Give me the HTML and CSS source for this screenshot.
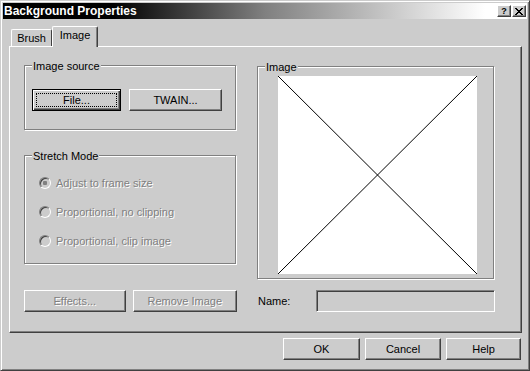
FILE: index.html
```html
<!DOCTYPE html>
<html lang="en">
<head>
    <meta charset="UTF-8">
    <meta name="viewport" content="width=device-width, initial-scale=1.0">
    <title>Background Properties</title>
    <link rel="stylesheet" href="styles.css">
</head>

<body>
    <div class="window">
        <div class="titlebar">
            <span class="title">Background Properties</span>
            <div class="caption-buttons">
                <button class="caption-btn help-btn">?</button>
                <button class="caption-btn close-btn">
                    <svg width="8" height="7" viewBox="0 0 8 7" shape-rendering="crispEdges">
                        <path d="M0 0h2v1h1v1h2v-1h1v-1h2v1h-1v1h-1v1h-1v1h1v1h1v1h1v1h-2v-1h-1v-1h-2v1h-1v1h-2v-1h1v-1h1v-1h1v-1h-1v-1h-1v-1h-1z" fill="#000"/>
                    </svg>
                </button>
            </div>
        </div>

        <div class="dialog-body">
            <div class="tabs">
                <div class="tab">Brush</div>
                <div class="tab active">Image</div>
            </div>

            <div class="tab-panel">
                <div class="col-left">
                    <div class="group source-group">
                        <span class="group-label">Image source</span>
                        <div class="source-buttons">
                            <button class="btn default file-btn">File...</button>
                            <button class="btn twain-btn">TWAIN...</button>
                        </div>
                    </div>

                    <div class="group stretch-group">
                        <span class="group-label">Stretch Mode</span>
                        <div class="radio-list">
                            <div class="radio disabled"><span class="radio-dot checked"></span>Adjust to frame size</div>
                            <div class="radio disabled"><span class="radio-dot"></span>Proportional, no clipping</div>
                            <div class="radio disabled"><span class="radio-dot"></span>Proportional, clip image</div>
                        </div>
                    </div>

                    <div class="action-buttons">
                        <button class="btn disabled effects-btn">Effects...</button>
                        <button class="btn disabled remove-btn">Remove Image</button>
                    </div>
                </div>

                <div class="col-right">
                    <div class="group image-group">
                        <span class="group-label">Image</span>
                        <div class="preview">
                            <svg width="199" height="198" viewBox="0 0 199 198">
                                <line x1="0" y1="0" x2="199" y2="198" stroke="#000" stroke-width="1"/>
                                <line x1="199" y1="0" x2="0" y2="198" stroke="#000" stroke-width="1"/>
                            </svg>
                        </div>
                    </div>
                    <div class="name-row">
                        <span class="name-label">Name:</span>
                        <div class="name-field"></div>
                    </div>
                </div>
            </div>

            <div class="dialog-buttons">
                <button class="btn ok-btn">OK</button>
                <button class="btn cancel-btn">Cancel</button>
                <button class="btn help-dlg-btn">Help</button>
            </div>
        </div>
    </div>
</body>
</html>
```

FILE: styles.css
```css
body {
    margin: 0;
    padding: 0;
    background-color: #cccccc;
}

.window {
    width: 530px;
    height: 371px;
    box-sizing: border-box;
    background: #cccccc;
    border: 1px solid;
    border-color: #cccccc #404040 #404040 #cccccc;
    box-shadow: inset 1px 1px #ffffff, inset -1px -1px #808080;
    padding: 2px;
    font-family: "Liberation Sans", Arial, sans-serif;
    font-size: 11px;
    color: #000;
}

/* title bar */
.titlebar {
    height: 16px;
    display: flex;
    align-items: center;
    justify-content: space-between;
    padding: 0 1px 0 1px;
    background: linear-gradient(to right, #000 110px, #808080 262px, #ffffff 482px);
}

.title {
    color: #fff;
    font-weight: bold;
    font-size: 12px;
    line-height: 16px;
}

.caption-buttons {
    display: flex;
    gap: 1px;
}

.caption-btn {
    width: 14px;
    height: 12px;
    padding: 0;
    margin: 0;
    box-sizing: border-box;
    background: #cccccc;
    border: 1px solid;
    border-color: #fff #404040 #404040 #fff;
    box-shadow: inset -1px -1px #808080;
    display: flex;
    align-items: center;
    justify-content: center;
    font-family: "Liberation Sans", Arial, sans-serif;
    font-weight: bold;
    font-size: 9px;
    line-height: 10px;
    color: #000;
}

/* tabs */
.dialog-body {
    padding: 7px 5px 0 6px;
}

.tabs {
    display: flex;
    align-items: flex-end;
    height: 20px;
    padding-left: 2px;
}

.tab {
    box-sizing: border-box;
    height: 17px;
    width: 41px;
    padding-top: 2px;
    line-height: 13px;
    text-align: center;
    border-top: 1px solid #fff;
    border-left: 1px solid #fff;
    border-right: 1px solid #404040;
    border-radius: 2px 2px 0 0;
}

.tab.active {
    position: relative;
    height: 21px;
    width: 46px;
    padding-top: 2px;
    margin-bottom: -1px;
    background: #cccccc;
    box-shadow: inset -1px 0 #808080;
}

.tab-panel {
    height: 287px;
    box-sizing: border-box;
    border: 1px solid;
    border-color: #fff #404040 #404040 #fff;
    box-shadow: inset -1px -1px #808080;
    display: flex;
    gap: 20px;
    padding: 18px 0 0 14px;
}

/* group boxes */
.group {
    box-sizing: border-box;
    border: 1px solid #808080;
    box-shadow: inset 1px 1px #fff, 1px 1px #fff;
}

.group-label {
    display: table;
    margin: -6px 0 0 7px;
    padding: 0 1px;
    line-height: 13px;
    background: #cccccc;
}

.col-left {
    width: 213px;
}

.source-group {
    width: 212px;
    height: 65px;
}

.source-buttons {
    display: flex;
    gap: 8px;
    margin: 16px 0 0 7px;
}

.stretch-group {
    width: 212px;
    height: 109px;
    margin-top: 25px;
}

.radio-list {
    display: flex;
    flex-direction: column;
    gap: 13px;
    margin: 12px 0 0 14px;
}

.radio {
    display: flex;
    align-items: center;
    height: 16px;
}

.radio.disabled {
    color: #808080;
    text-shadow: 1px 1px #fff;
}

.radio-dot {
    width: 12px;
    height: 12px;
    box-sizing: border-box;
    margin-right: 5px;
    border-radius: 50%;
    border: 1px solid;
    border-color: #808080 #fff #fff #808080;
    box-shadow: inset 1px 1px #404040;
    background: #cccccc;
}

.radio-dot.checked {
    background: radial-gradient(circle, #808080 2px, #cccccc 2.5px);
}

.action-buttons {
    display: flex;
    gap: 7px;
    margin-top: 26px;
}

/* buttons */
.btn {
    height: 22px;
    box-sizing: border-box;
    padding: 0;
    margin: 0;
    background: #cccccc;
    border: 1px solid;
    border-color: #fff #404040 #404040 #fff;
    box-shadow: inset -1px -1px #808080;
    font-family: "Liberation Sans", Arial, sans-serif;
    font-size: 11px;
    color: #000;
    text-align: center;
}

.btn.default {
    border-color: #000;
    box-shadow: inset 1px 1px #fff, inset -1px -1px #404040, inset -2px -2px #808080;
    outline: 1px dotted #000;
    outline-offset: -5px;
}

.btn.disabled {
    color: #808080;
    text-shadow: 1px 1px #fff;
}

.file-btn { width: 89px; }
.twain-btn { width: 93px; }
.effects-btn { width: 102px; }
.remove-btn { width: 105px; }

/* right column */
.col-right {
    width: 238px;
}

.image-group {
    width: 237px;
    height: 213px;
    margin-top: 1px;
}

.preview {
    width: 199px;
    height: 198px;
    margin: 2px 0 0 20px;
    background: #fff;
}

.preview svg {
    display: block;
}

.name-row {
    display: flex;
    align-items: center;
    margin-top: 11px;
}

.name-label {
    width: 58px;
    margin-left: 1px;
}

.name-field {
    width: 180px;
    height: 22px;
    box-sizing: border-box;
    border: 1px solid;
    border-color: #808080 #fff #fff #808080;
    box-shadow: inset 1px 1px #404040;
    background: #cccccc;
}

/* bottom buttons */
.dialog-buttons {
    display: flex;
    justify-content: flex-end;
    gap: 5px;
    margin: 5px 1px 0 0;
}

.ok-btn { width: 77px; }
.cancel-btn { width: 76px; }
.help-dlg-btn { width: 75px; }
```
